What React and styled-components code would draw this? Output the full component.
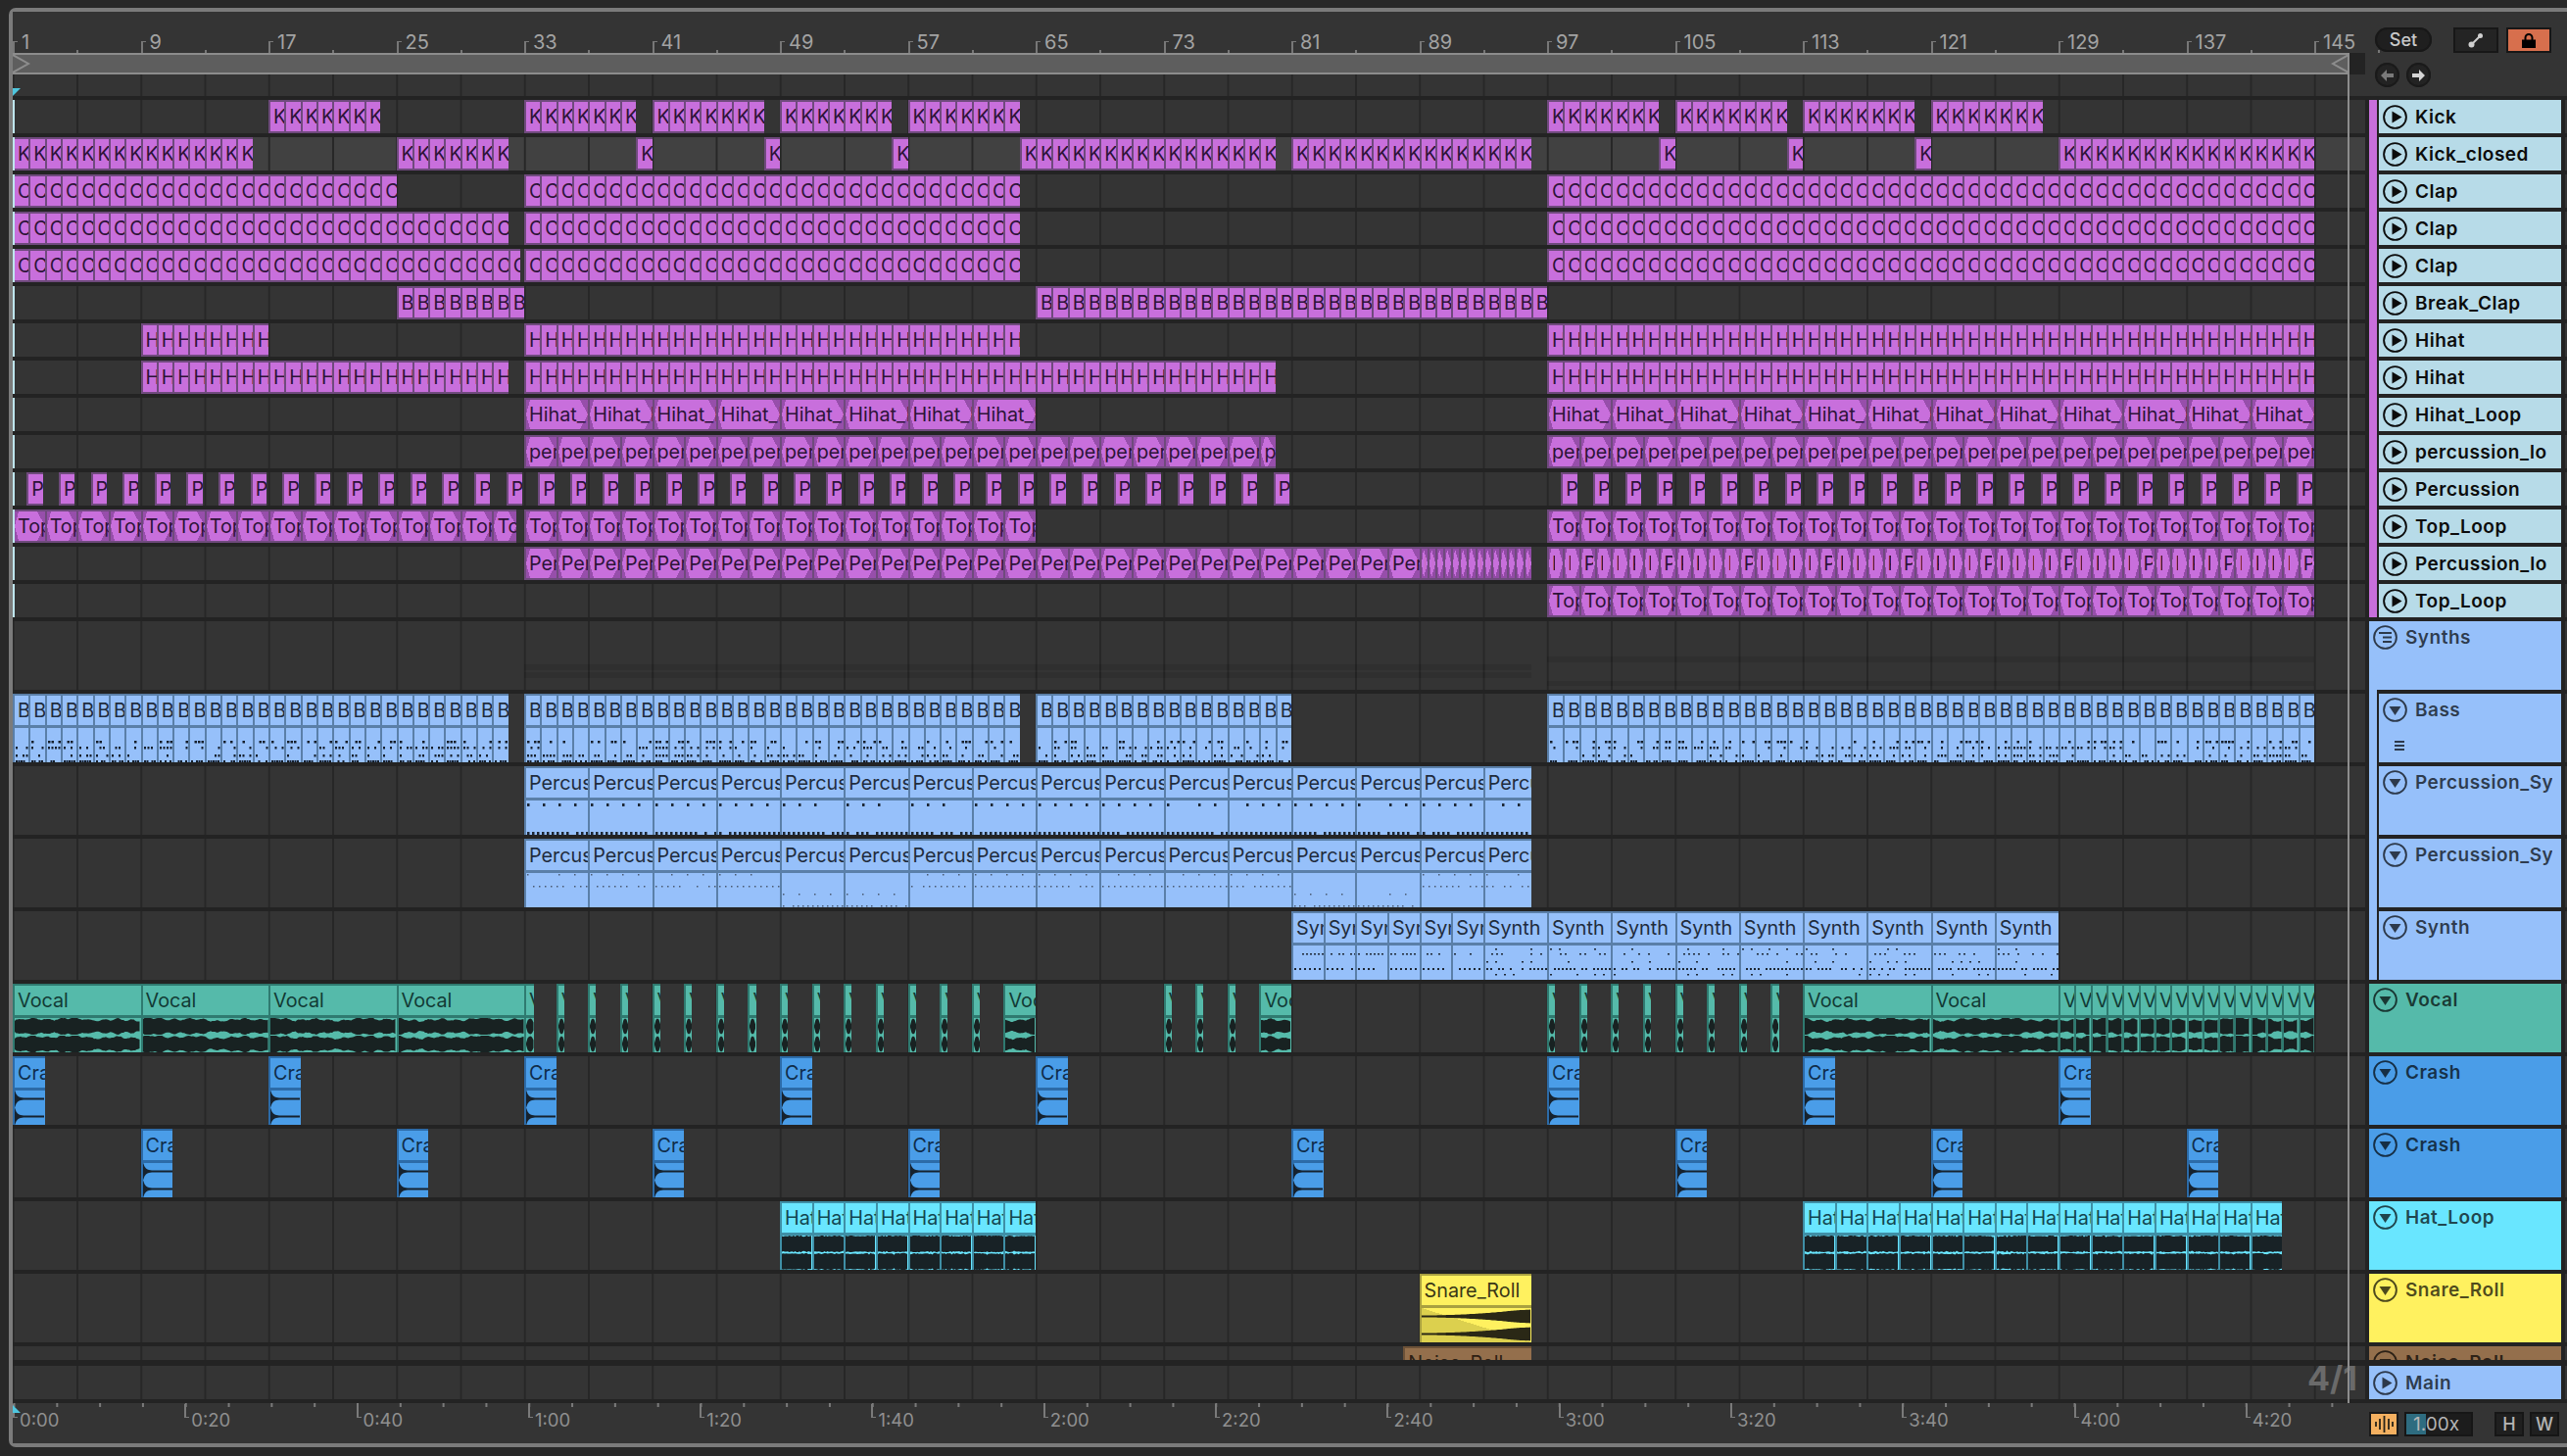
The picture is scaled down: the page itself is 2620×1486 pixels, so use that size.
import React from 'react';
import styled, { createGlobalStyle } from 'styled-components';

const GlobalStyle = createGlobalStyle`
    html, body {
        margin: 0;
        background: #282828;
        font-family: Inter, "Noto Sans", sans-serif;
        overflow: hidden;
    }
`

const TONES = {
    purple: { bg: '#c86fdc', edge: '#6f4a7d', ink: '#2d1338' },
    blue: { bg: '#96c0fa', edge: '#5a7fa8', ink: '#1f2c3d' },
    teal: { bg: '#55baaa', edge: '#2f7a70', ink: '#123a35' },
    crash: { bg: '#4a9de8', edge: '#2c6ba8', ink: '#0f2c4a' },
    cyan: { bg: '#69e6ff', edge: '#3f8fa6', ink: '#124650' },
    yellow: { bg: '#fff15f', edge: '#a9a040', ink: '#3a3716' },
    noise: { bg: '#946f4c', edge: '#6d5238', ink: '#2d2013' },
}

const Window = styled.div`
    width: 2620px;
    height: 1486px;
    box-sizing: border-box;
    padding: 8px 0 9px 9px;
`

const Frame = styled.div`
    height: 1469px;
    box-sizing: border-box;
    display: flex;
    background: #232323;
    border: 4px solid #7b7b7b;
    border-right: none;
    border-radius: 7px 0 0 7px;
`

const Timeline = styled.div`
    position: relative;
    flex: 0 0 2401px;
    min-width: 0;
    display: flex;
    flex-direction: column;
    gap: 4px;
`

const TopBlock = styled.div`
    display: flex;
    flex-direction: column;
`

const Ruler = styled.div`
    display: flex;
    height: 42px;
    background: #343434;
`

const BarMark = styled.div`
    position: relative;
    flex: 0 0 130.5px;
    box-sizing: border-box;
    padding: 19px 0 0 9px;
    font-size: 20px;
    line-height: 24px;
    color: #a3a3a3;

    &::before {
        content: '';
        position: absolute;
        left: 0;
        bottom: 0;
        width: 3px;
        height: 11px;
        border-top: 1.5px solid #777;
        border-left: 2px solid #777;
    }

    &::after {
        content: '';
        position: absolute;
        left: 65.25px;
        bottom: 0;
        width: 2px;
        height: 3px;
        background: #777;
    }
`

const LoopStrip = styled.div`
    height: 22px;
    width: 2384px;
    box-sizing: border-box;
    display: flex;
    justify-content: space-between;
    background: #5e5e5e;
    border-top: 2px solid #8c8c8c;
    border-bottom: 2px solid #8c8c8c;
`

const Lane = styled.div`
    position: relative;
    height: ${props => props.$h}px;
    box-sizing: border-box;
    display: grid;
    grid-template-columns: repeat(576, 2.03125px 2.046875px);
    grid-template-rows: minmax(0, 1fr);
    overflow: hidden;
    background-color: ${props => props.$selected ? '#414141' : '#343434'};
    background-image: linear-gradient(to right, #272727 0, #272727 2px, transparent 2px);
    background-size: 65.25px 100%;
    background-position: -0.25px 0;
    margin-top: ${props => props.$extra || 0}px;

    ${props => props.$marked && `
        &::before {
            content: '';
            position: absolute;
            left: 0;
            top: 0;
            bottom: 0;
            width: 1.5px;
            background: #bfe6ee;
            z-index: 1;
        }
    `}
`

const Clip = styled.div`
    position: relative;
    grid-row: 1;
    min-width: 0;
    overflow: hidden;
    display: flex;
    flex-direction: column;
    box-sizing: border-box;
    background: ${props => TONES[props.$tone].bg};
    border-top: 2px solid ${props => TONES[props.$tone].edge};
    border-left: 2px solid ${props => TONES[props.$tone].edge};
    border-bottom: ${props => props.$tall ? 'none' : `2px solid ${TONES[props.$tone].edge}`};
    color: ${props => TONES[props.$tone].ink};

    ${props => props.$fade && `
        &::after {
            --d: rgba(70, 25, 90, ${props.$fade === 'dense' ? 0.42 : 0.38});
            content: '';
            position: absolute;
            inset: 0;
            background-repeat: no-repeat;
            background-image:
                linear-gradient(to bottom right, var(--d) 50%, transparent 50%),
                linear-gradient(to top right, var(--d) 50%, transparent 50%),
                linear-gradient(to top right, transparent 50%, var(--d) 50%),
                linear-gradient(to bottom right, transparent 50%, var(--d) 50%);
            background-size: ${props.$fade === 'dense' ? '2px 50%, 2px 50%, 4px 50%, 4px 50%' : '4px 50%, 4px 50%, 8px 50%, 8px 50%'};
            background-position: left top, left bottom, right top, right bottom;
        }
    `}
`

const ClipTitle = styled.div`
    flex: ${props => props.$tall ? '0 0 30px' : '1 1 auto'};
    display: flex;
    align-items: center;
    padding-left: 3px;
    overflow: hidden;
    white-space: nowrap;
    font-size: 19.8px;
`

const CutLabel = styled.span`
    display: block;
    flex: none;
    overflow: hidden;
    width: ${props => props.$w}px;
`

const ClipBody = styled.div`
    flex: 1 1 auto;
    min-height: 0;
    border-top: 3px solid ${props => TONES[props.$tone].edge};
    background: ${props => props.$roll
        ? 'linear-gradient(to top right, #dcd04e 50%, #fff15f 50%)'
        : TONES[props.$tone].bg};
`

const BodyDrawing = styled.svg`
    display: block;
    width: 100%;
    height: 100%;
`

const GhostBand = styled.div`
    grid-row: 1;
    align-self: start;
    margin-top: ${props => props.$top}px;
    height: ${props => props.$h}px;
    background: rgba(0, 0, 0, 0.09);
`

const TimeFooter = styled.div`
    display: flex;
    height: 41px;
    background-color: #343434;
    background-image: linear-gradient(to right, #7a7a7a 0, #7a7a7a 2px, transparent 2px);
    background-size: 43.825px 4px;
    background-position: 0.5px 0;
    background-repeat: repeat-x;
`

const TimeMark = styled.div`
    position: relative;
    flex: 0 0 175.3px;
    box-sizing: border-box;
    padding: 5px 0 0 7px;
    font-size: 18.5px;
    line-height: 24px;
    color: #8f8f8f;

    &::before {
        content: '';
        position: absolute;
        left: 0;
        top: 1px;
        width: 3px;
        height: 13px;
        border-left: 2px solid #7a7a7a;
        border-bottom: 1.5px solid #7a7a7a;
    }
`

const LoopLine = styled.div`
    position: absolute;
    left: 2383px;
    top: 42px;
    bottom: 41px;
    width: 2px;
    background: #8d8d8d;
    z-index: 3;
`

const TimeSignature = styled.div`
    position: absolute;
    left: 2342px;
    top: 1378px;
    font-size: 34px;
    font-weight: 700;
    line-height: 1;
    color: #6a6a6a;
    z-index: 2;
`

const PlayMarker = styled.div`
    position: absolute;
    left: 0;
    top: ${props => props.$top}px;
    width: 8px;
    height: 8px;
    background: #4fc6de;
    z-index: 2;
    clip-path: ${props => props.$down
        ? 'polygon(0 0, 100% 0, 0 100%)'
        : 'polygon(0 0, 100% 100%, 0 100%)'};
`

const Panel = styled.div`
    flex: 1 1 auto;
    min-width: 0;
    display: flex;
    flex-direction: column;
    gap: 4px;
`

const PanelTop = styled.div`
    height: 86px;
    box-sizing: border-box;
    padding: 16px 0 0 10px;
    background: #343434;
    display: flex;
`

const NavColumn = styled.div`
    display: flex;
    flex-direction: column;
    gap: 11px;
    width: 58px;
`

const SetPill = styled.div`
    height: 25px;
    border-radius: 13px;
    background: #1f1f1f;
    box-shadow: inset 0 0 0 2px #181818;
    color: #c9c9c9;
    font-size: 18px;
    font-weight: 500;
    line-height: 25px;
    text-align: center;
`

const NavRow = styled.div`
    display: flex;
    justify-content: space-between;
    width: 57px;
`

const RoundButton = styled.div`
    width: 25px;
    height: 25px;
    border-radius: 50%;
    background: #232323;
    box-shadow: inset 0 0 0 2px #1a1a1a;
    display: flex;
    align-items: center;
    justify-content: center;
    color: ${props => props.$on ? '#d4d4d4' : '#7a7a7a'};
`

const SquareButton = styled.div`
    width: 46px;
    height: 26px;
    margin-left: ${props => props.$gap}px;
    box-sizing: border-box;
    border: 2px solid #171717;
    background: ${props => props.$lock ? '#d76f4d' : '#242424'};
    display: flex;
    align-items: center;
    justify-content: center;
`

const Group = styled.div`
    display: flex;
    flex-direction: column;
`

const GroupRow = styled.div`
    display: flex;
`

const Strip = styled.div`
    flex: 0 0 8px;
    margin-left: 4px;
    background: ${props => props.$color};
`

const TrackColumn = styled.div`
    flex: 1 1 auto;
    min-width: 0;
    display: flex;
    flex-direction: column;
    gap: 4px;
    padding-top: ${props => props.$pad || 0}px;
`

const TrackRow = styled.div`
    box-sizing: border-box;
    margin-top: ${props => props.$top || 0}px;
    padding: 0 4px 0 ${props => props.$inset ? 0 : 4}px;
    border-right: 2px solid #343434;
    height: ${props => props.$h}px;
    overflow: hidden;
    display: flex;
`

const TrackHead = styled.div`
    flex: 1 1 auto;
    min-width: 0;
    box-sizing: border-box;
    display: flex;
    flex-direction: column;
    justify-content: ${props => props.$short ? 'center' : 'flex-start'};
    padding: ${props => props.$short ? 0 : 4}px 9px 0 4px;
    background: ${props => props.$color};
    color: ${props => props.$ink};
    border-left: ${props => props.$inset ? '2px solid #232323' : 'none'};
    overflow: hidden;
`

const HeadLine = styled.div`
    display: flex;
    align-items: center;
    flex: none;
    gap: 8px;
`

const TrackName = styled.div`
    flex: 1 1 auto;
    min-width: 0;
    overflow: hidden;
    white-space: nowrap;
    font-size: 19px;
    font-weight: 600;
    letter-spacing: 0.5px;
    line-height: 25px;
`

const Grip = styled.svg`
    display: block;
    margin: 19px 0 0 12px;
`

const PanelFooter = styled.div`
    height: 41px;
    box-sizing: border-box;
    padding: 9px 0 0 4px;
    background: #343434;
    display: flex;
`

const ModeToggle = styled.div`
    width: 30px;
    height: 25px;
    box-sizing: border-box;
    border: 2px solid #1a1a1a;
    background: #f4b060;
    display: flex;
    align-items: center;
    justify-content: center;
`

const TempoBox = styled.div`
    width: 70px;
    height: 25px;
    margin-left: 6px;
    box-sizing: border-box;
    border: 2px solid #161616;
    padding-left: 7px;
    background: linear-gradient(to right, #2e6c80 0, #2e6c80 20px, #1c1c1c 20px);
    color: #b5b5b5;
    font-size: 19px;
    line-height: 21px;
`

const KeyBox = styled.div`
    width: 30px;
    height: 25px;
    margin-left: ${props => props.$gap}px;
    box-sizing: border-box;
    border: 2px solid #161616;
    background: #1f1f1f;
    color: #b5b5b5;
    font-size: 18px;
    font-weight: 500;
    line-height: 21px;
    text-align: center;
`

// random numbers that stay the same from one render to the next
const seeded = (seed) => {
    let s = seed * 7919 + 17
    return () => {
        s = (s * 16807) % 2147483647
        return (s % 10000) / 10000
    }
}

const seq = (from, to, step, len = step) => {
    const out = []
    for (let s = from; s < to; s += step) {
        out.push({ start: s, end: Math.min(s + len, to) })
    }
    return out
}

const CLIP_H = 35

const wavePath = (width, seed, ampAt) => {
    const rnd = seeded(seed)
    const step = 1.5
    const channel = (center) => {
        const top = []
        const bottom = []
        for (let x = 0; x <= width + 0.01; x += step) {
            const a = ampAt(x, rnd)
            top.push(`${x.toFixed(1)} ${(center - a).toFixed(1)}`)
            bottom.unshift(`${x.toFixed(1)} ${(center + a).toFixed(1)}`)
        }
        return `M${top.join('L')}L${bottom.join('L')}Z`
    }
    return channel(8.5) + channel(26.5)
}

const vocalAmp = (w, seed) => (x, rnd) => {
    if (w < 14) return 8 * Math.sqrt(Math.max(0.02, Math.sin(Math.PI * x / w)))
    const swell = 6.6
        + 0.9 * Math.sin(x / 2.3 + seed)
        + 0.9 * Math.sin(x / 7.1 + seed * 2)
        + 0.8 * Math.sin(x / 19 + seed * 3)
    return Math.min(8.6, swell + rnd() * 0.9)
}

const crashAmp = (x) => 0.9 + 8 * Math.exp(-x / 2.2)
const hatAmp = (x, rnd) => 7.6 + rnd() * 1.1 - (rnd() > 0.86 ? 0.8 : 0)
const rollAmp = (w) => (x) => {
    const t = x / w
    return 1 + 7 * t * t * (t > 0.85 ? 1 - (t - 0.85) : 1)
}

const dotsPath = (width, seed, rows) => {
    const rnd = seeded(seed)
    let d = ''
    rows.forEach(({ y, gap, chance, w, h }) => {
        for (let x = 1; x < width - 1; x += gap) {
            if (rnd() < chance) d += `M${x} ${y}h${w}v${h}h-${w}z`
        }
    })
    return d
}

const BASS_ROWS = [
    { y: 13, gap: 3.5, chance: 0.35, w: 2.5, h: 2.5 },
    { y: 19, gap: 3.5, chance: 0.4, w: 2, h: 2.5 },
    { y: 27, gap: 3.5, chance: 0.4, w: 2, h: 2.5 },
    { y: 33, gap: 2.5, chance: 0.75, w: 2, h: 2 },
]
const PERC_ROWS = [
    { y: 3, gap: 16, chance: 0.9, w: 2.5, h: 3 },
    { y: 32, gap: 5, chance: 0.9, w: 2.5, h: 3 },
]
const PERC_SOFT_HIGH = [
    { y: 1, gap: 16, chance: 0.9, w: 1.5, h: 1.5 },
    { y: 13, gap: 6, chance: 0.85, w: 1.5, h: 1.5 },
]
const PERC_SOFT_LOW = [
    { y: 21, gap: 16, chance: 0.9, w: 1.5, h: 1.5 },
    { y: 33, gap: 5, chance: 0.85, w: 1.5, h: 1.5 },
]
const SYNTH_SHORT = [
    { y: 8, gap: 4, chance: 0.6, w: 2, h: 1.5 },
    { y: 23, gap: 5, chance: 0.75, w: 2, h: 2 },
]
const SYNTH_LONG = [
    { y: 3, gap: 9, chance: 0.3, w: 2, h: 1.5 },
    { y: 8, gap: 5, chance: 0.5, w: 2, h: 1.5 },
    { y: 16, gap: 9, chance: 0.4, w: 2, h: 1.5 },
    { y: 23, gap: 4, chance: 0.75, w: 2, h: 2 },
    { y: 29, gap: 9, chance: 0.35, w: 2, h: 1.5 },
]

const drawBody = (kind, width, seed, index) => {
    if (kind === 'vocal') return { fill: '#182222', d: wavePath(width, seed, vocalAmp(width, seed)) }
    if (kind === 'crash') return { fill: '#16222e', d: wavePath(width, seed, crashAmp) }
    if (kind === 'hat') return { fill: '#182226', d: wavePath(width, seed, hatAmp) }
    if (kind === 'roll') return { fill: '#2a2816', d: wavePath(width, seed, rollAmp(width)) }
    if (kind === 'bass') return { fill: '#151f2c', d: dotsPath(width, seed, BASS_ROWS) }
    if (kind === 'perc') return { fill: '#1d2735', d: dotsPath(width, seed, PERC_ROWS) }
    if (kind === 'percSoft') {
        const low = [4, 5, 12, 13].includes(index)
        return { fill: '#4a5a72', d: dotsPath(width, seed, low ? PERC_SOFT_LOW : PERC_SOFT_HIGH) }
    }
    return { fill: '#1d2735', d: dotsPath(width, seed, width > 40 ? SYNTH_LONG : SYNTH_SHORT) }
}

const HEADS = {
    drums: { head: '#b7dbe8', ink: '#0c0c0c' },
    synths: { head: '#96c0fa', ink: 'rgba(0, 0, 0, 0.7)' },
}

const OPEN_BARS = [...seq(33, 64, 1), ...seq(97, 145, 1)]

const DRUM_TRACKS = [
    { name: 'Kick', clips: [...seq(17, 24, 1), ...seq(33, 40, 1), ...seq(41, 48, 1), ...seq(49, 56, 1), ...seq(57, 64, 1), ...seq(97, 104, 1), ...seq(105, 112, 1), ...seq(113, 120, 1), ...seq(121, 128, 1)] },
    { name: 'Kick_closed', selected: true, clips: [...seq(1, 16, 1), ...seq(25, 32, 1), ...seq(40, 41, 1), ...seq(48, 49, 1), ...seq(56, 57, 1), ...seq(64, 80, 1), ...seq(81, 96, 1), ...seq(104, 105, 1), ...seq(112, 113, 1), ...seq(120, 121, 1), ...seq(129, 145, 1)] },
    { name: 'Clap', clips: [...seq(1, 25, 1), ...OPEN_BARS] },
    { name: 'Clap', clips: [...seq(1, 32, 1), ...OPEN_BARS] },
    { name: 'Clap', clips: [...seq(1, 32.75, 1), ...OPEN_BARS] },
    { name: 'Break_Clap', clips: [...seq(25, 33, 1), ...seq(65, 97, 1)] },
    { name: 'Hihat', clips: [...seq(9, 17, 1), ...OPEN_BARS] },
    { name: 'Hihat', clips: [...seq(9, 32, 1), ...seq(33, 80, 1), ...seq(97, 145, 1)] },
    { name: 'Hihat_Loop', fade: true, clips: [...seq(33, 65, 4), ...seq(97, 145, 4)] },
    { name: 'percussion_lo', fade: true, clips: [...seq(33, 80, 2), ...seq(97, 145, 2)] },
    { name: 'Percussion', clips: [...seq(1.875, 81, 2, 1), ...seq(97.875, 145, 2, 1)] },
    { name: 'Top_Loop', fade: true, clips: [...seq(1, 32.5, 2), ...seq(33, 65, 2), ...seq(97, 145, 2)] },
    { name: 'Percussion_lo', fade: true, clips: [...seq(33, 89, 2), ...seq(89, 96, 0.5).map(c => ({ ...c, cut: 1 })), ...seq(97, 145, 1).map((c, i) => ({ ...c, cut: i % 5 === 2 ? 9 : 3 }))] },
    { name: 'Top_Loop', fade: true, clips: seq(97, 145, 2) },
]

const PERC_CLIPS = [...seq(33, 93, 4), { start: 93, end: 96 }]

const SYNTH_TRACKS = [
    { name: 'Bass', kind: 'bass', grip: true, clips: [...seq(1, 32, 1), ...seq(33, 64, 1), ...seq(65, 81, 1), ...seq(97, 145, 1)] },
    { name: 'Percussion_Synth', kind: 'perc', clips: PERC_CLIPS },
    { name: 'Percussion_Synth', kind: 'percSoft', clips: PERC_CLIPS },
    { name: 'Synth', kind: 'synth', clips: [...seq(81, 93, 2), ...seq(93, 129, 4)] },
]

const narrow = (from, to) => seq(from, to, 2, 0.5)

const AUDIO_TRACKS = [
    {
        name: 'Vocal', tone: 'teal', kind: 'vocal', clips: [
            ...seq(1, 33, 8), { start: 33, end: 33.625 }, ...narrow(35, 62), { start: 63, end: 65 },
            ...narrow(73, 78), { start: 79, end: 81 }, ...narrow(97, 112), ...seq(113, 129, 8), ...seq(129, 145, 1),
        ],
    },
    { name: 'Crash', tone: 'crash', kind: 'crash', clips: [1, 17, 33, 49, 65, 97, 113, 129].map(s => ({ start: s, end: s + 2 })) },
    { name: 'Crash', tone: 'crash', kind: 'crash', clips: [9, 25, 41, 57, 81, 105, 121, 137].map(s => ({ start: s, end: s + 2 })) },
    { name: 'Hat_Loop', tone: 'cyan', kind: 'hat', clips: [...seq(49, 65, 2), ...seq(113, 143, 2)] },
    { name: 'Snare_Roll', tone: 'yellow', kind: 'roll', clips: [{ start: 89, end: 96 }] },
]

const BAR_LABELS = Array.from({ length: 19 }, (_, i) => i * 8 + 1)
const TIME_LABELS = ['0:00', '0:20', '0:40', '1:00', '1:20', '1:40', '2:00', '2:20', '2:40', '3:00', '3:20', '3:40', '4:00', '4:20']

const gridColumn = (start, end) => `${Math.round((start - 1) * 8) + 1} / ${Math.round((end - 1) * 8) + 1}`

const TallClip = ({ clip, index, tone, kind, name, seed }) => {
    const width = (clip.end - clip.start) * 16.3125 - 2
    const body = drawBody(kind, width, seed + index * 13 + 1, index)
    return (
        <Clip $tone={tone} $tall style={{ gridColumn: gridColumn(clip.start, clip.end) }}>
            <ClipTitle $tall>{name}</ClipTitle>
            <ClipBody $tone={tone} $roll={kind === 'roll'}>
                <BodyDrawing viewBox={`0 0 ${width} ${CLIP_H}`} preserveAspectRatio="none">
                    <path d={body.d} fill={body.fill} />
                </BodyDrawing>
            </ClipBody>
        </Clip>
    )
}

const ShortClip = ({ clip, name, fade }) => (
    <Clip $tone="purple" $fade={fade ? (clip.cut ? 'dense' : 'soft') : undefined} style={{ gridColumn: gridColumn(clip.start, clip.end) }}>
        <ClipTitle>
            {clip.cut ? <CutLabel $w={clip.cut}>{name}</CutLabel> : name}
        </ClipTitle>
    </Clip>
)

const TrackIcon = ({ type }) => (
    <svg width="25" height="25" viewBox="0 0 25 25" style={{ flex: 'none' }}>
        <circle cx="12.5" cy="12.5" r="11.4" fill="none" stroke="currentColor" strokeWidth="1.9" />
        {type === 'play' && <polygon points="9.5,6.5 19.5,12.5 9.5,18.5" fill="currentColor" />}
        {type === 'down' && <polygon points="6.5,9 18.5,9 12.5,18" fill="currentColor" />}
        {type === 'list' && <path d="M6 8h13M10 12.5h9M10 17h9" stroke="currentColor" strokeWidth="1.8" fill="none" />}
    </svg>
)

const Head = ({ name, type, color, ink, short, inset, grip }) => (
    <TrackHead $color={color} $ink={ink} $short={short} $inset={inset}>
        <HeadLine>
            <TrackIcon type={type} />
            <TrackName>{name}</TrackName>
        </HeadLine>
        {grip && (
            <Grip width="10" height="10" viewBox="0 0 10 10">
                <path d="M0 1h10M0 5h10M0 9h10" stroke="currentColor" strokeWidth="1.8" />
            </Grip>
        )}
    </TrackHead>
)

const App = () => {
    return (
        <Window>
            <GlobalStyle />
            <Frame>
                <Timeline>
                    <TopBlock>
                        <Ruler>
                            {BAR_LABELS.map(n => <BarMark key={n}>{n}</BarMark>)}
                        </Ruler>
                        <LoopStrip>
                            <svg width="18" height="18" viewBox="0 0 18 18">
                                <path d="M0 0 L16 9 L0 18" fill="none" stroke="#8d8d8d" strokeWidth="2" />
                            </svg>
                            <svg width="18" height="18" viewBox="0 0 18 18">
                                <path d="M18 0 L2 9 L18 18" fill="none" stroke="#8d8d8d" strokeWidth="2" />
                            </svg>
                        </LoopStrip>
                        <Lane $h={22} />
                    </TopBlock>

                    {DRUM_TRACKS.map((track, t) => (
                        <Lane key={t} $h={34} $marked $selected={track.selected}>
                            {track.clips.map((clip, i) => (
                                <ShortClip key={i} clip={clip} name={track.name} fade={track.fade} />
                            ))}
                        </Lane>
                    ))}

                    <Lane $h={70}>
                        <GhostBand $top={44} $h={6} style={{ gridColumn: gridColumn(33, 96) }} />
                        <GhostBand $top={52} $h={6} style={{ gridColumn: gridColumn(33, 96) }} />
                        <GhostBand $top={36} $h={6} style={{ gridColumn: gridColumn(97, 145) }} />
                        <GhostBand $top={61} $h={5} style={{ gridColumn: gridColumn(97, 145) }} />
                    </Lane>

                    {SYNTH_TRACKS.map((track, t) => (
                        <Lane key={t} $h={70}>
                            {track.clips.map((clip, i) => (
                                <TallClip key={i} clip={clip} index={i} tone="blue" kind={track.kind}
                                    name={track.name} seed={t * 101 + 3} />
                            ))}
                        </Lane>
                    ))}

                    {AUDIO_TRACKS.map((track, t) => (
                        <Lane key={t} $h={70}>
                            {track.clips.map((clip, i) => (
                                <TallClip key={i} clip={clip} index={i} tone={track.tone} kind={track.kind}
                                    name={track.name} seed={t * 211 + 5} />
                            ))}
                        </Lane>
                    ))}

                    <Lane $h={14}>
                        <Clip $tone="noise" $tall style={{ gridColumn: gridColumn(88, 96) }}>
                            <ClipTitle $tall>Noise_Roll</ClipTitle>
                        </Clip>
                    </Lane>
                    <Lane $h={34} $extra={2} />

                    <TimeFooter>
                        {TIME_LABELS.map(label => <TimeMark key={label}>{label}</TimeMark>)}
                    </TimeFooter>

                    <LoopLine />
                    <TimeSignature>4/1</TimeSignature>
                    <PlayMarker $down $top={78} />
                    <PlayMarker $top={1422} />
                </Timeline>

                <Panel>
                    <PanelTop>
                        <NavColumn>
                            <SetPill>Set</SetPill>
                            <NavRow>
                                <RoundButton>
                                    <svg width="13" height="12" viewBox="0 0 13 12">
                                        <path d="M0 6 L6 0 V4 H13 V8 H6 V12 Z" fill="currentColor" />
                                    </svg>
                                </RoundButton>
                                <RoundButton $on>
                                    <svg width="13" height="12" viewBox="0 0 13 12">
                                        <path d="M13 6 L7 0 V4 H0 V8 H7 V12 Z" fill="currentColor" />
                                    </svg>
                                </RoundButton>
                            </NavRow>
                        </NavColumn>
                        <SquareButton $gap={22}>
                            <svg width="16" height="16" viewBox="0 0 16 16">
                                <path d="M4 12 L12 4" stroke="#cfcfcf" strokeWidth="2" />
                                <circle cx="3.5" cy="12.5" r="3" fill="#cfcfcf" />
                                <circle cx="12.5" cy="3.5" r="2.5" fill="#cfcfcf" />
                            </svg>
                        </SquareButton>
                        <SquareButton $gap={8} $lock>
                            <svg width="14" height="15" viewBox="0 0 14 15">
                                <path d="M3.5 7 V4.5 a3.5 3.5 0 0 1 7 0 V7" fill="none" stroke="#000" strokeWidth="2" />
                                <rect x="0" y="6.5" width="14" height="8.5" fill="#000" />
                            </svg>
                        </SquareButton>
                    </PanelTop>

                    <GroupRow>
                        <Strip $color="#c86fdc" />
                        <TrackColumn>
                            {DRUM_TRACKS.map((track, t) => (
                                <TrackRow key={t} $h={34} $inset>
                                    <Head name={track.name} type="play" short inset
                                        color={HEADS.drums.head} ink={HEADS.drums.ink} />
                                </TrackRow>
                            ))}
                        </TrackColumn>
                    </GroupRow>

                    <Group>
                        <TrackRow $h={70}>
                            <Head name="Synths" type="list" color="#96c0fa" ink={HEADS.synths.ink} />
                        </TrackRow>
                        <GroupRow>
                            <Strip $color="#96c0fa" />
                            <TrackColumn $pad={4}>
                                {SYNTH_TRACKS.map((track, t) => (
                                    <TrackRow key={t} $h={70} $inset>
                                        <Head name={track.name} type="down" inset grip={track.grip}
                                            color="#96c0fa" ink={HEADS.synths.ink} />
                                    </TrackRow>
                                ))}
                            </TrackColumn>
                        </GroupRow>
                    </Group>

                    {AUDIO_TRACKS.map((track, t) => (
                        <TrackRow key={t} $h={70}>
                            <Head name={track.name} type="down" color={TONES[track.tone].bg} ink="rgba(0, 0, 0, 0.7)" />
                        </TrackRow>
                    ))}

                    <TrackRow $h={14}>
                        <Head name="Noise_Roll" type="down" color={TONES.noise.bg} ink="rgba(0, 0, 0, 0.7)" />
                    </TrackRow>
                    <TrackRow $h={34} $top={2}>
                        <Head name="Main" type="play" short color="#96c0fa" ink={HEADS.synths.ink} />
                    </TrackRow>

                    <PanelFooter>
                        <ModeToggle>
                            <svg width="19" height="17" viewBox="0 0 19 17">
                                <path d="M1 6v5M5 3v11M9.5 0v17M14 3v11M18 6v5" stroke="#2a2418" strokeWidth="1.8" />
                            </svg>
                        </ModeToggle>
                        <TempoBox>1.00x</TempoBox>
                        <KeyBox $gap={22}>H</KeyBox>
                        <KeyBox $gap={6}>W</KeyBox>
                    </PanelFooter>
                </Panel>
            </Frame>
        </Window>
    )
}

export default App;
